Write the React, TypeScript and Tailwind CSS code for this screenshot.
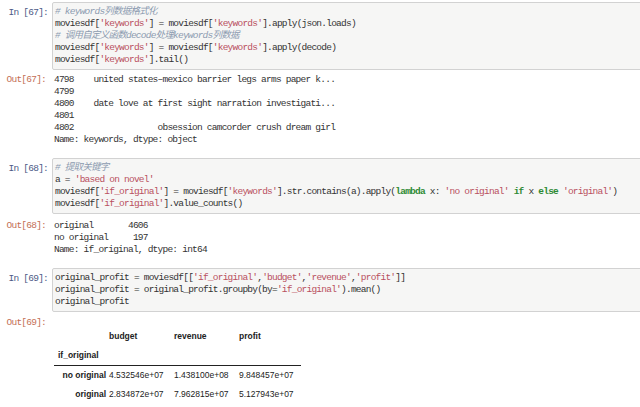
import React from "react";

const mono =
  "font-[family-name:Liberation_Mono,Noto_Sans_CJK_SC,monospace] text-[9.5px] tracking-[-0.77px] leading-[12px] whitespace-pre";

const S = ({ children }: { children: React.ReactNode }) => (
  <span className="text-[#b9505f]">{children}</span>
);
const C = ({ children }: { children: React.ReactNode }) => (
  <span className="italic text-[#8c9bb0]">{children}</span>
);
const K = ({ children }: { children: React.ReactNode }) => (
  <span className="font-bold text-[#2f8a34]">{children}</span>
);

const InCell = ({ n, children }: { n: number; children: React.ReactNode }) => (
  <div className="flex">
    <div className={`${mono} w-[48px] shrink-0 pt-[5px] text-right text-[#4d5a86]`}>In [{n}]:</div>
    <div className={`${mono} ml-[4px] w-[620px] shrink-0 rounded-[2px] border border-[#d2d2d2] bg-[#f6f6f5] pl-[2px] pt-[3px] pb-[3px] text-[#333]`}>
      {children}
    </div>
  </div>
);

const OutCell = ({ n, children, className = "" }: { n: number; children: React.ReactNode; className?: string }) => (
  <div className={`flex ${className}`}>
    <div className={`${mono} w-[46px] shrink-0 text-right text-[#c46f55]`}>Out[{n}]:</div>
    <div className={`${mono} ml-[8px] text-[#333]`}>{children}</div>
  </div>
);

export default function App() {
  return (
    <div className="w-[640px] h-[407px] overflow-hidden bg-white pt-[2px]">
      {/* cell 67 */}
      <InCell n={67}>
        <div><C># keywords列数据格式化</C></div>
        <div>moviesdf[<S>'keywords'</S>] = moviesdf[<S>'keywords'</S>].apply(json.loads)</div>
        <div><C># 调用自定义函数decode处理keywords列数据</C></div>
        <div>moviesdf[<S>'keywords'</S>] = moviesdf[<S>'keywords'</S>].apply(decode)</div>
        <div>moviesdf[<S>'keywords'</S>].tail()</div>
      </InCell>
      <OutCell n={67} className="mt-[4px]">
        <div>{"4798    united states–mexico barrier legs arms paper k..."}</div>
        <div>4799</div>
        <div>{"4800    date love at first sight narration investigati..."}</div>
        <div>4801</div>
        <div>{"4802                 obsession camcorder crush dream girl"}</div>
        <div>Name: keywords, dtype: object</div>
      </OutCell>

      {/* cell 68 */}
      <div className="mt-[12px]">
        <InCell n={68}>
          <div><C># 提取关键字</C></div>
          <div>a = <S>'based on novel'</S></div>
          <div>
            moviesdf[<S>'if_original'</S>] = moviesdf[<S>'keywords'</S>].str.contains(a).apply(<K>lambda</K> x: <S>'no original'</S> <K>if</K> x <K>else</K> <S>'original'</S>)
          </div>
          <div>moviesdf[<S>'if_original'</S>].value_counts()</div>
        </InCell>
      </div>
      <OutCell n={68} className="mt-[6px]">
        <div>{"original       4606"}</div>
        <div>{"no original     197"}</div>
        <div>Name: if_original, dtype: int64</div>
      </OutCell>

      {/* cell 69 */}
      <div className="mt-[12px]">
        <InCell n={69}>
          <div>original_profit = moviesdf[[<S>'if_original'</S>,<S>'budget'</S>,<S>'revenue'</S>,<S>'profit'</S>]]</div>
          <div>original_profit = original_profit.groupby(by=<S>'if_original'</S>).mean()</div>
          <div>original_profit</div>
        </InCell>
      </div>
      <OutCell n={69} className="mt-[5px]">
        <table className="mt-[10px] border-collapse font-[family-name:Liberation_Sans,Arial,sans-serif] text-[8.5px] leading-[19px] tracking-normal text-[#222]">
          <thead>
            <tr>
              <th className="w-[55px]"></th>
              <th className="w-[65px] pr-[4px] text-left font-bold">budget</th>
              <th className="w-[65px] pr-[4px] text-left font-bold">revenue</th>
              <th className="w-[62px] pr-[4px] text-left font-bold">profit</th>
            </tr>
            <tr className="border-b border-[#222]">
              <th className="pl-[4px] text-left font-bold">if_original</th>
              <th></th>
              <th></th>
              <th></th>
            </tr>
          </thead>
          <tbody>
            <tr className="leading-[18px]">
              <th className="pr-[3px] text-right font-bold">no original</th>
              <td className="pr-[4px] text-left">4.532546e+07</td>
              <td className="pr-[4px] text-left">1.438100e+08</td>
              <td className="pr-[4px] text-left">9.848457e+07</td>
            </tr>
            <tr className="leading-[20px]">
              <th className="pr-[3px] text-right font-bold">original</th>
              <td className="pr-[4px] text-left">2.834872e+07</td>
              <td className="pr-[4px] text-left">7.962815e+07</td>
              <td className="pr-[4px] text-left">5.127943e+07</td>
            </tr>
          </tbody>
        </table>
      </OutCell>
    </div>
  );
}
